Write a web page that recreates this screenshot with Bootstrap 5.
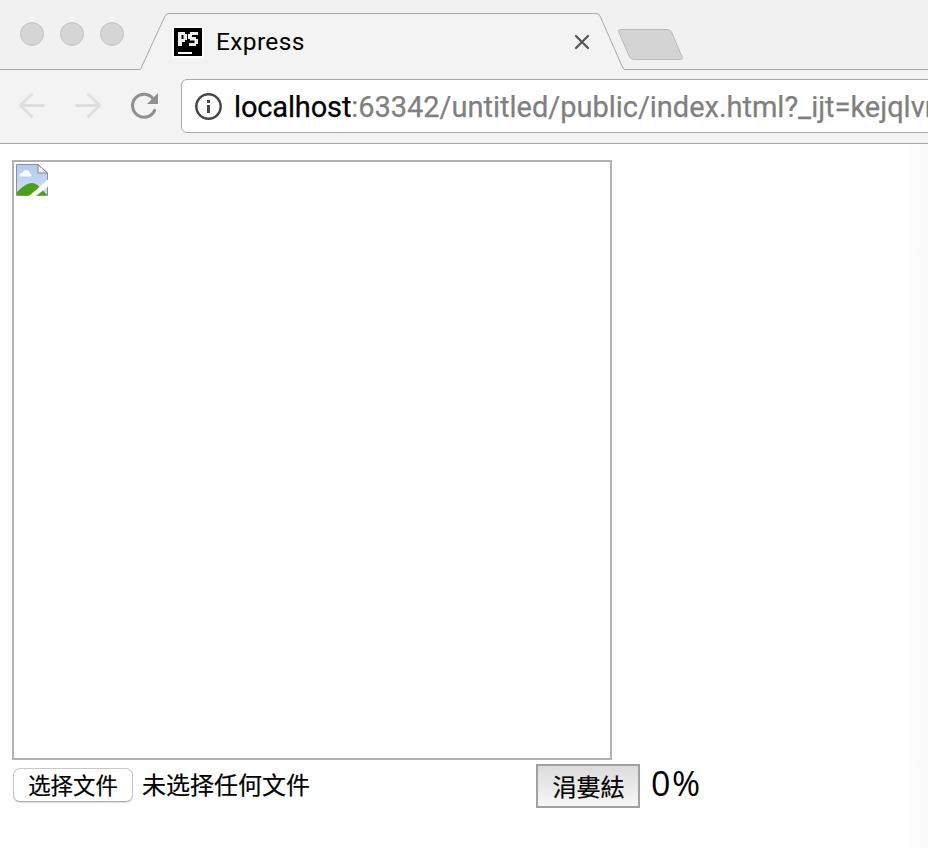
<!DOCTYPE html>
<html lang="zh-CN">
<head>
<meta charset="utf-8">
<meta name="viewport" content="width=device-width, initial-scale=1">
<title>Express</title>
<link href="https://cdn.jsdelivr.net/npm/bootstrap@5.3.0/dist/css/bootstrap.min.css" rel="stylesheet">
<style>
body { font-family: "Noto Sans", "Noto Sans CJK SC", sans-serif; color: #000; height: 848px; overflow: hidden; background: linear-gradient(90deg, #fff 900px, #fbfbfb 928px); }
.chrome { font-family: Roboto, "Liberation Sans", sans-serif; }
.titlebar { height: 70px; background: #f1f1f1; }
.lights { width: 140px; padding: 22px 0 0 20px; gap: 16px; border-bottom: 1px solid #a9a9a9; }
.light { width: 24px; height: 24px; border-radius: 50%; background: #d5d5d5; border: 1px solid #c5c5c5; }
.tab-item { width: 484px; padding: 13px 33px 0 34px; }
.tab-shape { z-index: 0; }
.tab-item > :not(.tab-shape) { z-index: 1; position: relative; }
.favicon { overflow: visible; }
.tab-title { font-size: 24.5px; line-height: 30px; margin-left: 14px; padding-top: 1px; letter-spacing: .35px; }
.tab-rest { border-bottom: 1px solid #a9a9a9; }
.toolbar { height: 74px; background: #f3f3f3; border-bottom: 1px solid #a9a9a9; padding: 9px 0 10px 18px; }
.toolbar-icons { width: 163px; padding-top: 12px; gap: 28px; }
.address { height: 54px; width: 760px; background: #fff; border: 1px solid #a9a9a9; border-radius: 6px; padding-left: 13px; }
.address-text { font-size: 29px; line-height: 36px; margin-left: 11px; padding-top: 2px; color: #808080; letter-spacing: -.02px; -webkit-text-stroke: .25px; }
.address-text span { color: #000; letter-spacing: -.15px; }
.page { padding: 16px 12px; }
.preview { width: 600px; height: 600px; border: 2px solid #b2b2b2; padding: 2px; }
.controls { height: 44px; margin-top: 4px; }
.pick { width: 120px; height: 34px; margin: 4px 0 0 1px; border: 1px solid #c8c8c8; border-bottom-color: #b0b0b0; border-radius: 7px; background: #fff; box-shadow: 0 1px 1px #ddd; font-size: 22.4px; line-height: 34px; padding: 0; color: #000; -webkit-text-stroke: .2px; }
.pick-name { width: 394px; margin-left: 9px; font-size: 24px; line-height: 42px; -webkit-text-stroke: .2px; }
.send { width: 104px; height: 44px; border: 2px solid #a0a0a0; border-radius: 0; background: linear-gradient(#dcdcdc, #f6f6f6); font-size: 24px; line-height: 37px; padding: 0 0 0 1px; color: #000; -webkit-text-stroke: .2px; }
.percent { font-family: "Open Sans", "Noto Sans", sans-serif; font-size: 34px; line-height: 38px; margin-left: 11px; letter-spacing: 1.5px; }
</style>
</head>
<body>
<header class="chrome overflow-hidden">
  <div class="titlebar d-flex">
    <div class="lights d-flex flex-shrink-0">
      <span class="light"></span><span class="light"></span><span class="light"></span>
    </div>
    <div class="tab-item position-relative d-flex align-items-center flex-shrink-0">
      <svg class="tab-shape position-absolute top-0 start-0" width="484" height="70" viewBox="0 0 484 70"><path d="M0 69.5Q1 69 2 66L25 16Q26 13.500 29 13.500H456Q459 13.500 460 16L482 66Q483.500 69.500 485 69.500V70H0Z" fill="#f3f3f3"/><path d="M0 69.500Q1 69 2 66L25 16Q26 13.500 29 13.500H456Q459 13.500 460 16L482 66Q483.500 69.500 485 69.500" fill="none" stroke="#a9a9a9"/></svg>
      <svg class="favicon" width="28" height="28" viewBox="0 0 28 28"><path d="M-2-2H30V30H-2Z" fill="#fff"/><path d="M0 0H28V28H0Z"/><path d="M4 4H11V6H13V12H11V14H8V18H4ZM7.500 7V11H9.500V7Z" fill="#eee" fill-rule="evenodd"/><path d="M16 4H24V7H18V9H22V11H24V16H22V18H15V15H20.500V12.500H16V11H14V6H16Z" fill="#eee"/><path d="M4 24H18V26H4Z" fill="#fff"/></svg>
      <span class="tab-title">Express</span>
      <svg class="ms-auto" width="18" height="18" viewBox="0 0 18 18"><path d="M3 3L15 15M15 3L3 15" stroke="#555" stroke-width="2.200" stroke-linecap="round"/></svg>
    </div>
    <div class="tab-rest flex-grow-1">
      <svg class="d-block" width="66" height="69" viewBox="624 0 66 69" overflow="visible"><path d="M621 29.500H667Q670 29.500 671.500 32L682 56.500Q683.500 59.500 680.500 59.500H634Q631 59.500 629.500 57L618.700 32Q618 29.500 621 29.500Z" fill="#d4d4d4" stroke="#bcbcbc"/></svg>
    </div>
  </div>
  <div class="toolbar d-flex">
    <div class="toolbar-icons d-flex flex-shrink-0">
      <svg width="28" height="30" viewBox="0 0 28 30"><path d="M25.500 14.500H2.500M13.500 3.500L2.500 14.500L13.500 25.500" fill="none" stroke="#dedede" stroke-width="2.800" stroke-linecap="round"/></svg>
      <svg width="28" height="30" viewBox="0 0 28 30"><path d="M2.500 14.500H25.500M14.500 3.500L25.500 14.500L14.500 25.500" fill="none" stroke="#dedede" stroke-width="2.800" stroke-linecap="round"/></svg>
      <svg width="30" height="30" viewBox="130 91 30 30"><path d="M153.400 98.900A11.500 11.500 0 1 0 154.600 110.300" fill="none" stroke="#8f8f8f" stroke-width="3" stroke-linecap="round"/><path d="M158 93V104H147Z" fill="#8f8f8f"/></svg>
    </div>
    <div class="address d-flex align-items-center flex-shrink-0">
      <svg class="flex-shrink-0" width="28" height="28" viewBox="0 0 28 28"><circle cx="13.500" cy="14.500" r="12.200" fill="none" stroke="#484848" stroke-width="2.500"/><path d="M12 8H15V11H12ZM12 13H15V21H12Z" fill="#484848"/></svg>
      <div class="address-text text-nowrap"><span>localhost</span>:63342/untitled/public/index.html?_ijt=kejqlvr</div>
    </div>
  </div>
</header>
<main class="page">
  <div class="preview">
    <svg class="d-block" width="32" height="32" viewBox="0 0 32 32">
      <defs><linearGradient id="sky" x1="0" y1="0" x2="0" y2="1"><stop offset="0" stop-color="#b4c9f0"/><stop offset="1" stop-color="#d0e0fa"/></linearGradient></defs>
      <path d="M.5.500H22L31.500 10V31.500H.500Z" fill="url(#sky)"/>
      <path d="M3.500 12.500Q3 9 6.500 8.700Q8 5.500 11 6.200Q14 7 14 9.500Q16 10.500 15.500 12.500H3.500Z" fill="#fff"/>
      <path d="M1 31V28C6 23 11 19 16 19S25 24 31 31Z" fill="#4a9f1d"/>
      <path d="M22 .500V9H31.500Z" fill="#f6f6f6" stroke="#858585"/>
      <path d="M.5 31.500V.500H22L31.500 9V31.500Z" fill="none" stroke="#8f8f98"/>
      <path d="M32.500 15L13 32H20L32.500 22Z" fill="#fff"/>
    </svg>
  </div>
  <div class="controls d-flex align-items-start">
    <button class="pick btn flex-shrink-0" type="button">选择文件</button>
    <span class="pick-name text-nowrap">未选择任何文件</span>
    <button class="send btn flex-shrink-0" type="button">涓婁紶</button>
    <span class="percent">0%</span>
  </div>
</main>
<script src="https://cdn.jsdelivr.net/npm/bootstrap@5.3.0/dist/js/bootstrap.bundle.min.js"></script>
</body>
</html>
